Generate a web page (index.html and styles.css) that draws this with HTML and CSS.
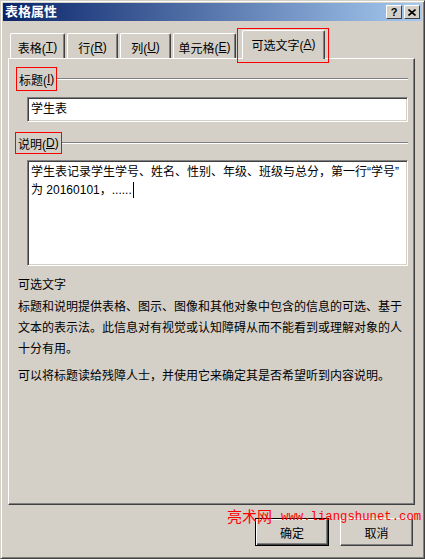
FILE: index.html
```html
<!DOCTYPE html>
<html>
    <head>
        <meta charset="utf-8">
        <link rel="stylesheet" href="styles.css">
        <title>表格属性</title>
    </head>
    <body>
        <div class="window">
            <div class="titlebar">
                <span class="title">表格属性</span>
                <div class="title-buttons">
                    <span class="title-button help">?</span>
                    <span class="title-button">
                        <svg width="8" height="7" viewBox="0 0 8 7">
                            <path d="M0.5 0.5 L7.5 6.5 M7.5 0.5 L0.5 6.5" stroke="#000" stroke-width="1.6" fill="none"/>
                        </svg>
                    </span>
                </div>
            </div>

            <div class="tabs">
                <div class="tab tab-1">表格(<u>T</u>)</div>
                <div class="tab tab-2">行(<u>R</u>)</div>
                <div class="tab tab-3">列(<u>U</u>)</div>
                <div class="tab tab-4">单元格(<u>E</u>)</div>
                <div class="tab tab-selected marked">可选文字(<u>A</u>)</div>
            </div>

            <div class="panel">
                <div class="group-header header-title">
                    <span class="group-label">标题(<u>I</u>)</span>
                    <span class="group-line"></span>
                </div>
                <div class="input">学生表</div>

                <div class="group-header header-desc">
                    <span class="group-label">说明(<u>D</u>)</span>
                    <span class="group-line"></span>
                </div>
                <div class="textarea">
                    <div>学生表记录学生学号、姓名、性别、年级、班级与总分<span class="comma">，</span>第一行“学号”</div>
                    <div>为 20160101<span class="comma">，</span>......<span class="caret"></span></div>
                </div>

                <p class="info-title">可选文字</p>
                <p class="info-text">标题和说明提供表格、图示、图像和其他对象中包含的信息的可选、基于<br>文本的表示法。此信息对有视觉或认知障碍从而不能看到或理解对象的人<br>十分有用。</p>
                <p class="info-text info-last">可以将标题读给残障人士<span class="comma">，</span>并使用它来确定其是否希望听到内容说明。</p>
            </div>

            <div class="footer">
                <button class="dialog-button default-button">确定</button>
                <button class="dialog-button">取消</button>
            </div>

            <div class="watermark">
                <span class="watermark-name">亮术网</span>
                <span class="watermark-url">www.liangshunet.com</span>
            </div>
        </div>
    </body>
</html>
```

FILE: styles.css
```css
body {
    margin: 0;
    font-family: "Liberation Sans", "Noto Sans CJK SC", sans-serif;
    font-size: 12px;
    color: #000;
}

.window {
    position: relative;
    width: 425px;
    height: 559px;
    box-sizing: border-box;
    padding: 1px;
    background-color: #d4d0c8;
    border: 1px solid;
    border-color: #d4d0c8 #404040 #404040 #d4d0c8;
    box-shadow: inset 1px 1px #fff, inset -1px -1px #808080;
}

.titlebar {
    margin: 1px 1px 0 1px;
    height: 18px;
    display: flex;
    align-items: center;
    justify-content: space-between;
    background: linear-gradient(to right, #0a246a, #a6caf0);
}

.title {
    color: white;
    font-weight: bold;
    font-size: 13px;
    padding-left: 2px;
    line-height: 18px;
}

.title-buttons {
    display: flex;
    gap: 2px;
    margin-right: 2px;
}

.title-button {
    width: 16px;
    height: 14px;
    box-sizing: border-box;
    background-color: #d4d0c8;
    border: 1px solid;
    border-color: #fff #404040 #404040 #fff;
    display: flex;
    align-items: center;
    justify-content: center;
    font-weight: bold;
    font-size: 11px;
    line-height: 12px;
}

.tabs {
    display: flex;
    align-items: flex-end;
    margin: 9px 0 0 8px;
}

.tab {
    height: 25px;
    box-sizing: border-box;
    margin-right: 2px;
    border: 1px solid;
    border-color: #fff #404040 transparent #fff;
    border-bottom: none;
    border-radius: 2px 2px 0 0;
    box-shadow: inset -1px 0 #808080;
    display: flex;
    align-items: center;
    justify-content: center;
    padding-top: 2px;
}

.tab-1 { width: 55px; }
.tab-2 { width: 51px; }
.tab-3 { width: 51px; }
.tab-4 { width: 63px; }

.tab-selected {
    position: relative;
    z-index: 1;
    width: 83px;
    height: 29px;
    margin-left: 4px;
    margin-bottom: -1px;
    background-color: #d4d0c8;
    padding-top: 0;
    padding-bottom: 2px;
}

.marked::after {
    content: "";
    position: absolute;
    left: -6px;
    right: -5px;
    top: -3px;
    bottom: -4px;
    border: 1px solid #f00;
}

.panel {
    height: 447px;
    box-sizing: border-box;
    margin: 0 8px 0 6px;
    border-top: 1px solid #fff;
    border-left: 1px solid #fff;
    border-right: 1px solid #404040;
    border-bottom: 1px solid #404040;
    box-shadow: inset -1px -1px #808080;
    padding-right: 6px;
}

.group-header {
    display: flex;
    align-items: center;
}

.header-title {
    height: 24px;
    margin: 8px 0 0 7px;
}

.header-desc {
    height: 22px;
    margin: 10px 0 0 6px;
}

.group-label {
    align-self: stretch;
    display: flex;
    align-items: center;
    padding: 0 2px;
    border: 1px solid #f00;
}

.group-line {
    flex: 1;
    height: 0;
    border-top: 1px solid #808080;
    border-bottom: 1px solid #fff;
}

.input,
.textarea {
    margin: 6px 0 0 18px;
    background-color: #fff;
    box-sizing: border-box;
    border: 1px solid;
    border-color: #808080 #fff #fff #808080;
    box-shadow: inset 1px 1px #404040, inset -1px -1px #d4d0c8;
}

.input {
    height: 25px;
    padding-left: 3px;
    line-height: 23px;
}

.textarea {
    height: 106px;
    padding: 2px 0 0 3px;
    line-height: 18px;
}

.comma {
    display: inline-block;
    width: 12px;
    text-align: center;
}

.caret {
    display: inline-block;
    width: 1px;
    height: 16px;
    background-color: #000;
    vertical-align: -4px;
    margin-left: 1px;
}

.info-title {
    margin: 9px 0 0 9px;
    line-height: 20px;
}

.info-text {
    margin: 2px 0 0 9px;
    line-height: 21px;
}

.info-last {
    margin-top: 6px;
}

.footer {
    display: flex;
    justify-content: flex-end;
    gap: 11px;
    margin: 13px 10px 0 0;
}

.dialog-button {
    width: 73px;
    height: 28px;
    box-sizing: border-box;
    font-family: "Liberation Sans", "Noto Sans CJK SC", sans-serif;
    font-size: 12px;
    background-color: #d4d0c8;
    border: 1px solid;
    border-color: #fff #404040 #404040 #fff;
    box-shadow: inset -1px -1px #808080;
    padding: 0;
}

.default-button {
    width: 74px;
    border: 1px solid #000;
    box-shadow: inset 1px 1px #fff, inset -1px -1px #404040, inset -2px -2px #808080;
}

.watermark {
    position: absolute;
    left: 226px;
    top: 506px;
    display: flex;
    align-items: center;
    gap: 9px;
    color: #f00;
}

.watermark-name {
    font-size: 15px;
    line-height: 20px;
}

.watermark-url {
    font-family: "Liberation Mono", monospace;
    font-size: 12.3px;
    line-height: 20px;
}
```
